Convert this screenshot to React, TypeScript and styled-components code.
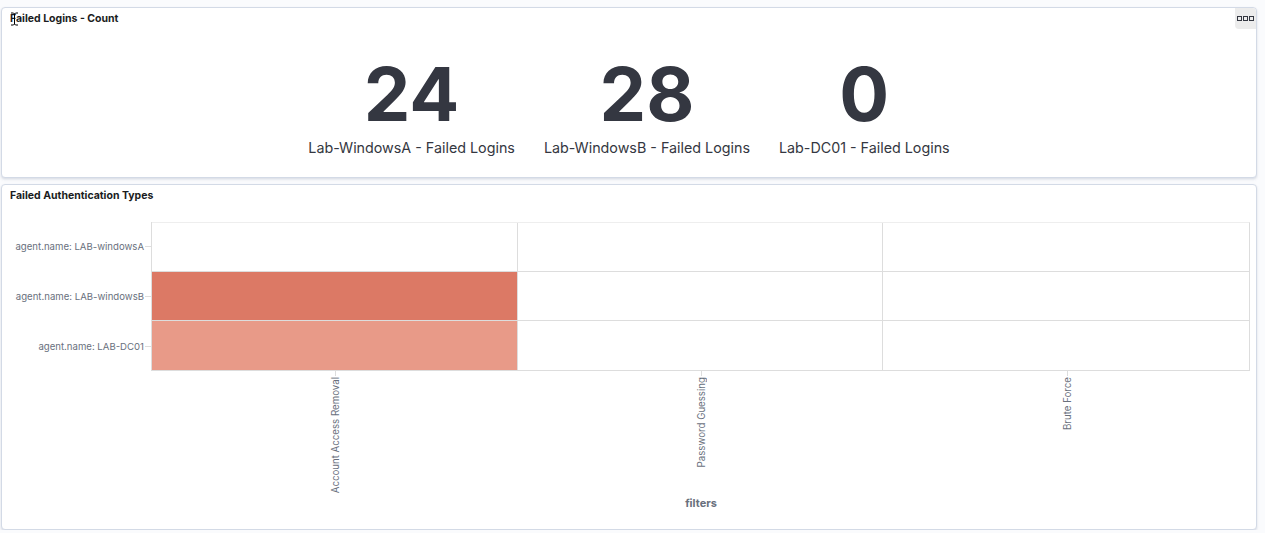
import React from 'react';
import styled, { createGlobalStyle } from 'styled-components';

const GlobalStyle = createGlobalStyle`
    html, body {
        margin: 0;
        padding: 0;
        background: #fafbfd;
        font-family: Inter, "Noto Sans", sans-serif;
        color: #343741;
    }
`;

const Page = styled.div`
    display: flex;
    flex-direction: column;
    gap: 6px;
    padding: 7px 8px 0 1px;
    width: 1265px;
    box-sizing: border-box;
`;

const Panel = styled.div<{ $height: number }>`
    position: relative;
    height: ${(p) => p.$height}px;
    box-sizing: border-box;
    background: #fff;
    border: 1px solid #d3dae6;
    border-radius: 4px;
    box-shadow: 0 1px 2px rgba(152, 162, 179, 0.2), 0 2px 3px rgba(152, 162, 179, 0.15);
    display: flex;
    flex-direction: column;
`;

const PanelTitle = styled.div`
    font-size: 10.5px;
    font-weight: 700;
    color: #1a1c21;
    padding: 4px 8px 0;
    line-height: 14px;
    height: 15px;
`;

const MenuButton = styled.div`
    position: absolute;
    top: 0;
    right: 0;
    width: 21px;
    height: 21px;
    background: #ececec;
    border-radius: 0 4px 0 4px;
    display: flex;
    align-items: center;
    justify-content: center;
    gap: 1px;
`;

const Dot = styled.span`
    width: 3px;
    height: 3px;
    border: 1px solid #343741;
`;

const Cursor = styled.svg`
    position: absolute;
    left: 8px;
    top: 4px;
`;

const Metrics = styled.div`
    display: flex;
    justify-content: center;
    gap: 29px;
    padding-top: 30px;
`;

const Metric = styled.div`
    display: flex;
    flex-direction: column;
    align-items: center;
`;

const MetricValue = styled.div`
    font-size: 74px;
    font-weight: 700;
    line-height: 74px;
    color: #343741;
`;

const MetricLabel = styled.div`
    font-size: 14.3px;
    line-height: 18px;
    color: #343741;
    margin-top: 8px;
`;

const ChartArea = styled.div`
    display: grid;
    grid-template-columns: 150px 1098px;
    grid-template-rows: 149px 140px;
    margin-top: 18px;
`;

const YAxis = styled.div`
    display: grid;
    grid-template-rows: repeat(3, 1fr);
    border-right: 1px solid #ddd;
`;

const YLabel = styled.div`
    display: flex;
    align-items: center;
    justify-content: flex-end;
    font-size: 9.6px;
    color: #69707d;
    &::after {
        content: '';
        width: 6px;
        height: 1px;
        background: #ddd;
        margin-left: 1px;
    }
`;

const Plot = styled.div`
    display: grid;
    grid-template-columns: repeat(3, 1fr);
    grid-template-rows: repeat(3, 1fr);
    border-top: 1px solid #eee;
    border-right: 1px solid #ddd;
    border-bottom: 1px solid #ddd;
`;

const Cell = styled.div<{ $fill?: string }>`
    background: ${(p) => p.$fill || 'transparent'};
    border-right: 1px solid #ddd;
    border-bottom: 1px solid #ddd;
    &:nth-child(3n) {
        border-right: none;
    }
    &:nth-child(n + 7) {
        border-bottom: none;
    }
`;

const XAxis = styled.div`
    grid-column: 2;
    display: grid;
    grid-template-columns: repeat(3, 1fr);
    grid-template-rows: 128px auto;
`;

const XTick = styled.div`
    position: relative;
    display: flex;
    justify-content: center;
    &::before {
        content: '';
        position: absolute;
        top: 0;
        left: 50%;
        width: 1px;
        height: 5px;
        background: #ddd;
    }
`;

const XLabel = styled.div`
    writing-mode: vertical-rl;
    transform: rotate(180deg);
    font-size: 9.7px;
    color: #69707d;
    margin-top: 6px;
    height: fit-content;
    white-space: nowrap;
`;

const AxisTitle = styled.div`
    grid-column: 1 / span 3;
    text-align: center;
    font-size: 11px;
    font-weight: 700;
    color: #69707d;
    margin-top: -3px;
`;

const metrics = [
    { value: 24, label: 'Lab-WindowsA - Failed Logins' },
    { value: 28, label: 'Lab-WindowsB - Failed Logins' },
    { value: 0, label: 'Lab-DC01 - Failed Logins' },
];

const agents = ['agent.name: LAB-windowsA', 'agent.name: LAB-windowsB', 'agent.name: LAB-DC01'];
const filters = ['Account Access Removal', 'Password Guessing', 'Brute Force'];

// heat values per agent row, per filter column
const heat: (string | undefined)[][] = [
    [undefined, undefined, undefined],
    ['#dc7965', undefined, undefined],
    ['#e89a88', undefined, undefined],
];

export default function App() {
    return (
        <>
            <GlobalStyle />
            <Page>
                <Panel $height={171}>
                    <PanelTitle>Failed Logins - Count</PanelTitle>
                    <Cursor width="9" height="14" viewBox="0 0 9 14">
                        <path d="M1 1h2.5l1 1 1-1H8M4.5 2v10M1 13h2.5l1-1 1 1H8" fill="none" stroke="#000" strokeWidth="1" />
                    </Cursor>
                    <MenuButton>
                        <Dot />
                        <Dot />
                        <Dot />
                    </MenuButton>
                    <Metrics>
                        {metrics.map((m) => (
                            <Metric key={m.label}>
                                <MetricValue>{m.value}</MetricValue>
                                <MetricLabel>{m.label}</MetricLabel>
                            </Metric>
                        ))}
                    </Metrics>
                </Panel>
                <Panel $height={346}>
                    <PanelTitle>Failed Authentication Types</PanelTitle>
                    <ChartArea>
                        <YAxis>
                            {agents.map((a) => (
                                <YLabel key={a}>{a}</YLabel>
                            ))}
                        </YAxis>
                        <Plot>
                            {heat.map((row, r) =>
                                row.map((fill, c) => <Cell key={`${r}-${c}`} $fill={fill} />)
                            )}
                        </Plot>
                        <div />
                        <XAxis>
                            {filters.map((f) => (
                                <XTick key={f}>
                                    <XLabel>{f}</XLabel>
                                </XTick>
                            ))}
                            <AxisTitle>filters</AxisTitle>
                        </XAxis>
                    </ChartArea>
                </Panel>
            </Page>
        </>
    );
}
